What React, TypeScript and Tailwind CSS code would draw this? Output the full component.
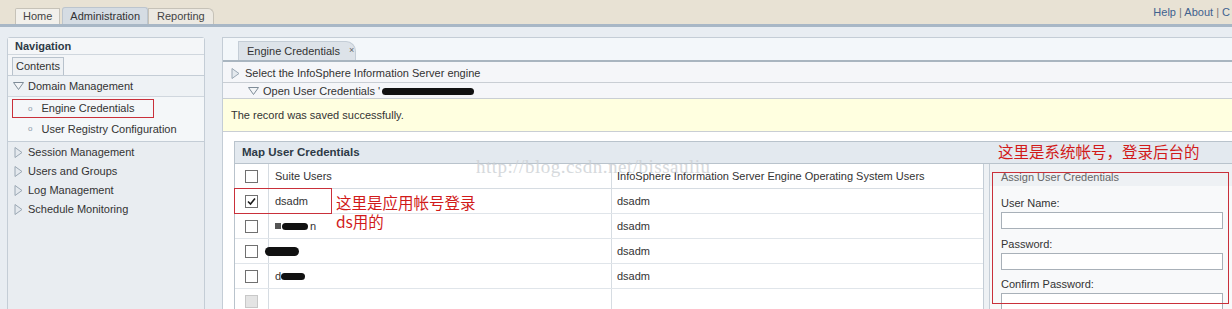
import React from "react";

const font = { fontFamily: '"Liberation Sans", Arial, sans-serif' };

function TriRight() {
  return (
    <svg width="9" height="11" viewBox="0 0 9 11" className="shrink-0">
      <path d="M1 0.5 L8 5.5 L1 10.5 Z" fill="#e4e9ee" stroke="#9aa7b3" strokeWidth="1" />
    </svg>
  );
}

function TriDown() {
  return (
    <svg width="11" height="8" viewBox="0 0 11 8" className="shrink-0">
      <path d="M0.5 0.5 L10.5 0.5 L5.5 7.5 Z" fill="#f3f5f7" stroke="#7f8c98" strokeWidth="1" />
    </svg>
  );
}

function Checkbox({ checked, disabled }: { checked?: boolean; disabled?: boolean }) {
  return (
    <div
      className={`w-[13px] h-[13px] border flex items-center justify-center ${
        disabled ? "border-[#c8c8c8] bg-[#e4e4e4]" : "border-[#707070] bg-white"
      }`}
    >
      {checked && (
        <svg width="9" height="9" viewBox="0 0 9 9">
          <path d="M1 4.5 L3.5 7 L8 1.5" fill="none" stroke="#1a1a1a" strokeWidth="1.6" />
        </svg>
      )}
    </div>
  );
}

const navItems = ["Session Management", "Users and Groups", "Log Management", "Schedule Monitoring"];

const rows = [
  { user: "dsadm", checked: true, os: "dsadm" },
  { user: "blob1", os: "dsadm" },
  { user: "blob2", os: "dsadm" },
  { user: "blob3", os: "dsadm" },
  { user: "", os: "", disabled: true },
];

function Redacted({ kind }: { kind: string }) {
  if (kind === "blob1")
    return (
      <div className="flex items-center gap-[1px]">
        <span className="w-[6px] h-[6px] bg-[#555]" />
        <span className="w-[26px] h-[7px] bg-[#111] rounded-sm" />
        <span className="text-[#333] ml-[1px]">n</span>
      </div>
    );
  if (kind === "blob2") return <span className="block w-[34px] h-[9px] bg-[#111] rounded-full -ml-[10px]" />;
  return (
    <div className="flex items-center">
      <span className="text-[#333]">d</span>
      <span className="w-[24px] h-[7px] bg-[#111] rounded-sm" />
    </div>
  );
}

export default function App() {
  return (
    <div className="w-[1232px] h-[309px] overflow-hidden bg-[#e8edf2] text-[11px] text-[#333]" style={font}>
      {/* top bar */}
      <div className="h-[24px] bg-[#e8e2d4] flex items-end justify-between">
        <div className="flex items-end pl-[15px]">
          <div className="h-[16px] px-[7px] bg-[#f2f0eb] border border-b-0 border-[#c6c2b8] rounded-tl-[2px] flex items-center text-[#444]">
            Home
          </div>
          <div className="h-[17px] px-[7px] ml-[2px] bg-[#d5dce3] border border-b-0 border-[#bcc5ce] rounded-t-[3px] flex items-center text-[#333]">
            Administration
          </div>
          <div className="h-[16px] px-[8px] bg-[#ece9e2] border border-b-0 border-[#c6c2b8] rounded-tr-[6px] flex items-center text-[#444]">
            Reporting
          </div>
        </div>
        <div className="pb-[4px] pr-[2px] text-[#40618f] whitespace-nowrap">
          Help <span className="text-[#777]">|</span> About <span className="text-[#777]">|</span> C
        </div>
      </div>
      <div className="h-[3px] bg-[#a8b7c6]" />

      <div className="flex pt-[10px] pl-[7px] gap-[17px]">
        {/* left nav */}
        <div className="w-[198px] h-[280px] shrink-0 bg-[#e9edf1] border border-[#c4cdd6] rounded-t-[3px] flex flex-col">
          <div className="h-[17px] shrink-0 bg-[#f4f6f8] border-b border-[#d0d7de] pl-[7px] flex items-center font-bold text-[#2d3a46]">
            Navigation
          </div>
          <div className="h-[21px] shrink-0 bg-[#f4f6f8] border-b border-[#c4cdd6] pl-[4px] flex items-end">
            <div className="h-[18px] px-[3px] border border-b-0 border-[#b8c2cc] bg-[#eef1f4] flex items-center">
              Contents
            </div>
          </div>
          <div className="h-[21px] shrink-0 bg-[#eef2f5] border-b border-[#d0d7de] pl-[5px] flex items-center gap-[4px]">
            <TriDown />
            <span>Domain Management</span>
          </div>
          <div className="h-[45px] shrink-0 bg-[#f4f7f9] border-b border-[#c4cdd6] pt-[2px] flex flex-col">
            <div className="ml-[4px] w-[142px] h-[19px] border border-[#c9303a] flex items-center pl-[15px] gap-[9px]">
              <span className="text-[8px] text-[#8a99a8]">o</span>
              <span>Engine Credentials</span>
            </div>
            <div className="h-[22px] flex items-center pl-[20px] gap-[9px]">
              <span className="text-[8px] text-[#8a99a8]">o</span>
              <span>User Registry Configuration</span>
            </div>
          </div>
          <div className="pt-[1px] flex flex-col">
            {navItems.map((n) => (
              <div key={n} className="h-[19px] pl-[6px] flex items-center gap-[5px]">
                <TriRight />
                <span>{n}</span>
              </div>
            ))}
          </div>
        </div>

        {/* main */}
        <div className="flex-1 min-w-0 h-[280px] overflow-hidden bg-white border-l border-t border-[#c4cdd6] flex flex-col relative">
          <div className="h-[24px] shrink-0 bg-[#f3f7fa] border-b-2 border-[#a9b5c0] flex items-end pl-[15px]">
            <div className="h-[19px] w-[118px] whitespace-nowrap bg-[#dde3e9] border border-b-0 border-[#c4cdd6] rounded-tr-[10px] flex items-center pl-[8px] gap-[9px] text-[#333]">
              <span>Engine Credentials</span>
              <span className="text-[9px] text-[#666]">×</span>
            </div>
          </div>
          <div className="h-[21px] shrink-0 bg-[#f5f6f9] border-b border-[#c9ced4] pl-[8px] pt-[2px] flex items-center gap-[5px]">
            <TriRight />
            <span>Select the InfoSphere Information Server engine</span>
          </div>
          <div className="h-[16px] shrink-0 bg-[#f5f6f9] border-b border-[#c9ced4] pl-[25px] pt-[1px] flex items-center gap-[4px]">
            <TriDown />
            <span>Open User Credentials '</span>
            <span className="w-[92px] h-[7px] bg-[#111] rounded-sm -ml-[2px]" />
          </div>
          <div className="h-[33px] shrink-0 bg-[#ffffe0] border-b border-[#c9ced4] pl-[8px] flex items-center">
            The record was saved successfully.
          </div>
          <div className="h-[9px] shrink-0 bg-white" />

          {/* map user credentials */}
          <div className="ml-[11px] flex-1 flex flex-col border-l border-t border-[#b9c3cc]">
            <div className="h-[22px] shrink-0 bg-[#e3e9ef] border-b border-[#b9c3cc] pl-[7px] flex items-center font-bold text-[#2d3a46] text-[11.5px]">
              Map User Credentials
            </div>
            <div className="flex flex-1">
              <div className="w-[749px] shrink-0 bg-white border-r border-[#c4cdd6]">
                <div className="h-[25px] flex border-b border-[#d6dce2]">
                  <div className="w-[34px] border-r border-[#d6dce2] flex items-center justify-center">
                    <Checkbox />
                  </div>
                  <div className="w-[343px] border-r border-[#d6dce2] pl-[6px] flex items-center">Suite Users</div>
                  <div className="flex-1 pl-[5px] flex items-center">InfoSphere Information Server Engine Operating System Users</div>
                </div>
                {rows.map((r, i) => (
                  <div key={i} className="h-[25px] flex border-b border-[#e0e5ea]">
                    <div className="w-[34px] border-r border-[#d6dce2] flex items-center justify-center">
                      <Checkbox checked={r.checked} disabled={r.disabled} />
                    </div>
                    <div className="w-[343px] border-r border-[#d6dce2] pl-[6px] flex items-center">
                      {r.user === "dsadm" ? r.user : r.user ? <Redacted kind={r.user} /> : null}
                    </div>
                    <div className="flex-1 pl-[5px] flex items-center">{r.os}</div>
                  </div>
                ))}
              </div>
              <div className="w-[6px] shrink-0 bg-[#eef1f4] border-r border-[#c4cdd6]" />
              <div className="flex-1 bg-[#f8f9fa] flex flex-col">
                <div className="h-[22px] shrink-0 bg-[#eef1f4] pl-[11px] pb-[1px] flex items-end text-[#666]">
                  Assign User Credentials
                </div>
                <div className="pl-[11px] pr-[9px] flex flex-col leading-[13px]">
                  <div className="pt-[11px] pb-[2px]">User Name:</div>
                  <div className="h-[17px] bg-white border border-[#a8b0b8]" />
                  <div className="pt-[9px] pb-[2px]">Password:</div>
                  <div className="h-[17px] bg-white border border-[#a8b0b8]" />
                  <div className="pt-[8px] pb-[2px]">Confirm Password:</div>
                  <div className="h-[17px] bg-white border border-[#a8b0b8]" />
                </div>
              </div>
            </div>
          </div>

          {/* annotations */}
          <div className="absolute left-[11px] top-[150px] w-[98px] h-[26px] border border-[#c9303a]" />
          <div
            className="absolute left-[113px] top-[155px] text-[15.5px] leading-[19px] text-[#d11a1a]"
            style={{ fontFamily: '"Noto Sans CJK SC", sans-serif' }}
          >
            这里是应用帐号登录
            <br />
            ds用的
          </div>
          <div
            className="absolute left-[775px] top-[104px] text-[15.5px] leading-[19px] text-[#d11a1a] whitespace-nowrap"
            style={{ fontFamily: '"Noto Sans CJK SC", sans-serif' }}
          >
            这里是系统帐号，登录后台的
          </div>
          <div className="absolute left-[769px] top-[134px] w-[237px] h-[132px] border border-[#c9303a]" />
          <div
            className="absolute left-[253px] top-[115px] text-[19px] text-[#cdd1d5] opacity-80 whitespace-nowrap tracking-[0.5px]"
            style={{ fontFamily: '"Liberation Serif", serif' }}
          >
            http://blog.csdn.net/bissauliu
          </div>
        </div>
      </div>
    </div>
  );
}
